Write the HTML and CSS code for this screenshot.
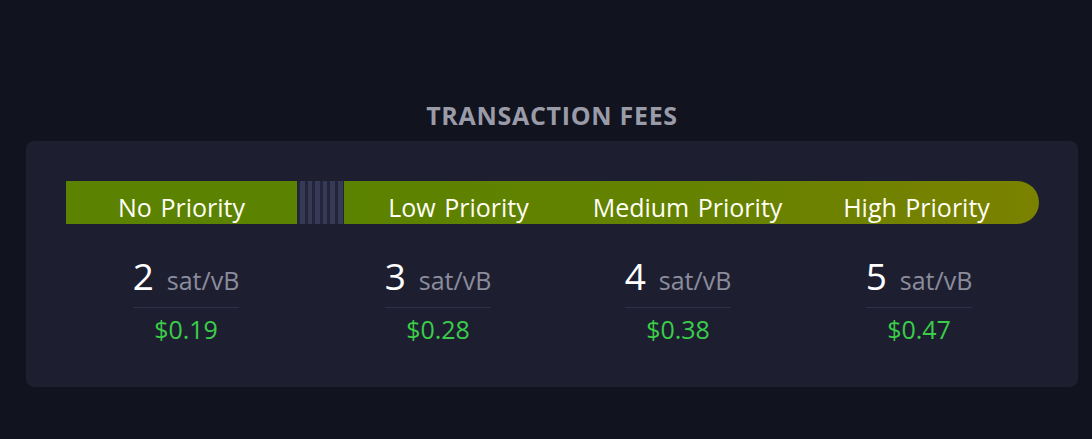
FILE: index.html
```html
<!DOCTYPE html>
<html>
<head>
<meta charset="utf-8">
<link rel="stylesheet" href="styles.css">
</head>
<body>
<div class="page">
  <h2 class="title">TRANSACTION FEES</h2>
  <div class="card">
    <div class="bar">
      <div class="seg seg-none">No Priority</div>
      <div class="stripes"></div>
      <div class="seg-group">
        <div class="seg">Low Priority</div>
        <div class="seg">Medium Priority</div>
        <div class="seg">High Priority</div>
      </div>
    </div>
    <div class="fees">
      <div class="fee"><div class="rate"><span class="num">2</span><span class="unit">sat/vB</span></div><div class="usd">$0.19</div></div>
      <div class="fee"><div class="rate"><span class="num">3</span><span class="unit">sat/vB</span></div><div class="usd">$0.28</div></div>
      <div class="fee"><div class="rate"><span class="num">4</span><span class="unit">sat/vB</span></div><div class="usd">$0.38</div></div>
      <div class="fee"><div class="rate"><span class="num">5</span><span class="unit">sat/vB</span></div><div class="usd">$0.47</div></div>
    </div>
  </div>
</div>
</body>
</html>
```
FILE: styles.css
```css
html, body {
  margin: 0;
  padding: 0;
  background: #11131f;
  font-family: "Open Sans", "Noto Sans", sans-serif;
}
.page {
  padding: 100px 14px 0 26px;
}
.title {
  margin: 0 0 11px 0;
  text-align: center;
  font-size: 25px;
  line-height: 30px;
  font-weight: 700;
  color: #9a9ba8;
  letter-spacing: 0.7px;
}
.card {
  width: 1052px;
  height: 246px;
  box-sizing: border-box;
  background: #1d1f31;
  border-radius: 8px;
  padding: 40px 39px 0 40px;
}
.bar {
  display: flex;
  height: 43px;
}
.seg {
  display: flex;
  align-items: center;
  justify-content: center;
  flex: 1;
  color: #fffff6;
  font-size: 25px;
  padding-top: 8px;
  box-sizing: border-box;
  word-spacing: 2px;
  white-space: nowrap;
}
.seg-none {
  flex: 0 0 231px;
  background: #5b8200;
}
.stripes {
  flex: 0 0 47px;
  background: repeating-linear-gradient(90deg, #23263b 0 3px, #363a55 3px 7.6px);
}
.seg-group {
  flex: 1;
  display: flex;
  padding-right: 8px;
  background: linear-gradient(90deg, #5b8200 0%, #648200 50%, #7b8200 100%);
  border-radius: 0 22px 22px 0;
}
.fees {
  display: grid;
  grid-template-columns: 240px 264px 216px 266px;
  margin-top: 30px;
  justify-items: center;
}
.fee {
  text-align: center;
}
.rate {
  border-bottom: 1px solid #2e3046;
  padding: 0 0 1px 0;
  white-space: nowrap;
  line-height: 44px;
}
.num {
  color: #ffffff;
  font-size: 37px;
  margin-right: 13px;
}
.unit {
  color: #8b8c9c;
  font-size: 25px;
}
.usd {
  color: #3bcc49;
  font-size: 25px;
  line-height: 34px;
  margin-top: 4px;
}
```
